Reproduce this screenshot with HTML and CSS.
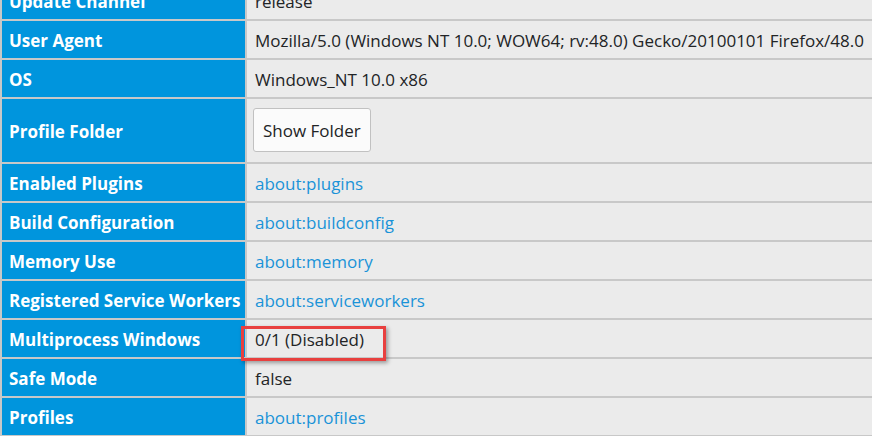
FILE: index.html
```html
<!DOCTYPE html>
<html>
<head>
<meta charset="utf-8">
<link rel="stylesheet" href="styles.css">
</head>
<body>
<div class="page">
<table class="info">
<tr><th>Update Channel</th><td>release</td></tr>
<tr><th>User Agent</th><td>Mozilla/5.0 (Windows NT 10.0; WOW64; rv:48.0) Gecko/20100101 Firefox/48.0</td></tr>
<tr><th>OS</th><td>Windows_NT 10.0 x86</td></tr>
<tr class="tall"><th>Profile Folder</th><td><button class="btn">Show Folder</button></td></tr>
<tr><th>Enabled Plugins</th><td><a href="#">about:plugins</a></td></tr>
<tr><th>Build Configuration</th><td><a href="#">about:buildconfig</a></td></tr>
<tr><th>Memory Use</th><td><a href="#">about:memory</a></td></tr>
<tr><th>Registered Service Workers</th><td><a href="#">about:serviceworkers</a></td></tr>
<tr><th>Multiprocess Windows</th><td class="marked">0/1 (Disabled)<span class="highlight"></span></td></tr>
<tr><th>Safe Mode</th><td>false</td></tr>
<tr><th>Profiles</th><td><a href="#">about:profiles</a></td></tr>
</table>
</div>
</body>
</html>
```

FILE: styles.css
```css
html, body {
  margin: 0;
  padding: 0;
  background: #ebebeb;
  overflow: hidden;
}
.page {
  margin-top: -20px;
}
.info {
  border-collapse: separate;
  border-spacing: 2px;
  margin: 0 0 0 -2px;
  padding: 0 0 0 2px;
  background: #c8c8c8;
  font-family: "Open Sans", "Noto Sans", sans-serif;
  font-size: 17px;
  width: 1000px;
  table-layout: fixed;
}
.info th {
  width: 229px;
  background: #0095dd;
  color: #fff;
  font-weight: 700;
  text-align: left;
  padding: 9px 7px 7px;
  line-height: 21px;
  white-space: nowrap;
}
.info td {
  background: #ebebeb;
  color: #222426;
  padding: 9px 8px 7px;
  line-height: 21px;
  white-space: nowrap;
}
.info tr.tall td {
  padding-top: 9px;
  padding-bottom: 10px;
}
.info a {
  color: #1a93d8;
  text-decoration: none;
}
.btn {
  font-family: inherit;
  font-size: 17px;
  color: #222426;
  background: #fbfbfb;
  border: 1px solid #c1c1c1;
  border-radius: 3px;
  height: 44px;
  padding: 0 9px;
  margin-left: -2px;
}
.marked {
  position: relative;
}
.highlight {
  position: absolute;
  left: -6px;
  top: 6px;
  width: 139px;
  height: 29px;
  border: 3px solid #e8403f;
  box-shadow: 2px 2px 4px rgba(0,0,0,0.35);
}
```
